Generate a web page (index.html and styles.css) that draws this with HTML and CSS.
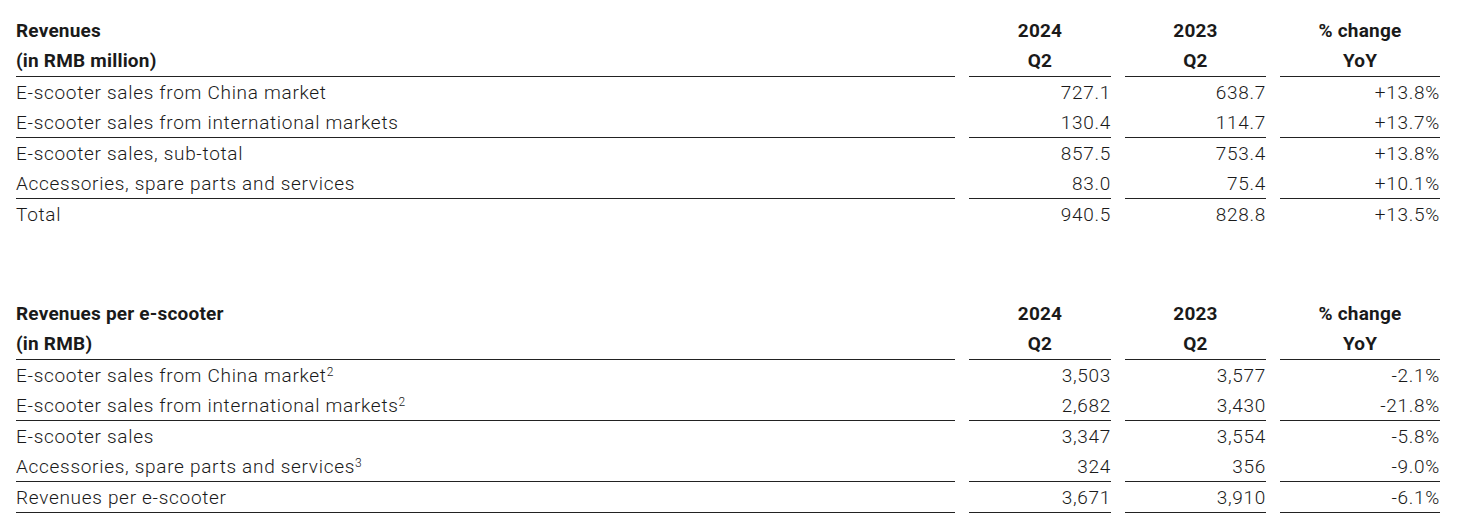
FILE: index.html
```html
<!DOCTYPE html>
<html>
<head>
<meta charset="utf-8">
<link rel="stylesheet" href="styles.css">
</head>
<body>
<div class="page">
  <div class="table">
    <div class="row head">
      <div class="cell label b">Revenues</div>
      <div class="cell c b">2024</div>
      <div class="cell c b">2023</div>
      <div class="cell c b">% change</div>
    </div>
    <div class="row head">
      <div class="cell label b">(in RMB million)</div>
      <div class="cell c b">Q2</div>
      <div class="cell c b">Q2</div>
      <div class="cell c b">YoY</div>
    </div>
    <div class="row line">
      <div class="cell label">E-scooter sales from China market</div>
      <div class="cell num">727.1</div>
      <div class="cell num">638.7</div>
      <div class="cell num">+13.8%</div>
    </div>
    <div class="row">
      <div class="cell label">E-scooter sales from international markets</div>
      <div class="cell num">130.4</div>
      <div class="cell num">114.7</div>
      <div class="cell num">+13.7%</div>
    </div>
    <div class="row line">
      <div class="cell label">E-scooter sales, sub-total</div>
      <div class="cell num">857.5</div>
      <div class="cell num">753.4</div>
      <div class="cell num">+13.8%</div>
    </div>
    <div class="row">
      <div class="cell label">Accessories, spare parts and services</div>
      <div class="cell num">83.0</div>
      <div class="cell num">75.4</div>
      <div class="cell num">+10.1%</div>
    </div>
    <div class="row line">
      <div class="cell label">Total</div>
      <div class="cell num">940.5</div>
      <div class="cell num">828.8</div>
      <div class="cell num">+13.5%</div>
    </div>
  </div>

  <div class="table second">
    <div class="row head">
      <div class="cell label b">Revenues per e-scooter</div>
      <div class="cell c b">2024</div>
      <div class="cell c b">2023</div>
      <div class="cell c b">% change</div>
    </div>
    <div class="row head">
      <div class="cell label b">(in RMB)</div>
      <div class="cell c b">Q2</div>
      <div class="cell c b">Q2</div>
      <div class="cell c b">YoY</div>
    </div>
    <div class="row line">
      <div class="cell label">E-scooter sales from China market<sup>2</sup></div>
      <div class="cell num">3,503</div>
      <div class="cell num">3,577</div>
      <div class="cell num">-2.1%</div>
    </div>
    <div class="row">
      <div class="cell label">E-scooter sales from international markets<sup>2</sup></div>
      <div class="cell num">2,682</div>
      <div class="cell num">3,430</div>
      <div class="cell num">-21.8%</div>
    </div>
    <div class="row line">
      <div class="cell label">E-scooter sales</div>
      <div class="cell num">3,347</div>
      <div class="cell num">3,554</div>
      <div class="cell num">-5.8%</div>
    </div>
    <div class="row">
      <div class="cell label">Accessories, spare parts and services<sup>3</sup></div>
      <div class="cell num">324</div>
      <div class="cell num">356</div>
      <div class="cell num">-9.0%</div>
    </div>
    <div class="row line">
      <div class="cell label">Revenues per e-scooter</div>
      <div class="cell num">3,671</div>
      <div class="cell num">3,910</div>
      <div class="cell num">-6.1%</div>
    </div>
    <div class="row end">
      <div class="cell"></div>
      <div class="cell"></div>
      <div class="cell"></div>
      <div class="cell"></div>
    </div>
  </div>
</div>
</body>
</html>
```

FILE: styles.css
```css
html, body {
  margin: 0;
  padding: 0;
  background: #ffffff;
}
.page {
  padding: 15px 0 0 16px;
  font-family: Roboto, "Liberation Sans", sans-serif;
  font-size: 19px;
  font-weight: 300;
  letter-spacing: 0.7px;
  color: #1a1a1a;
}
.table {
  display: flex;
  flex-direction: column;
}
.second {
  margin-top: 69px;
}
.row {
  display: grid;
  grid-template-columns: 939px 142px 141px 160px;
  column-gap: 14px;
  height: 30px;
}
.row.head {
  height: 30px;
}
.row.head + .row.head {
  height: 31px;
}
.cell {
  display: flex;
  align-items: center;
  white-space: nowrap;
  height: 100%;
  box-sizing: border-box;
}
.row.line .cell {
  border-top: 1px solid #222;
}
.row.line {
  height: 31px;
}
.row.end {
  height: 1px;
}
.row.end .cell {
  border-top: 1px solid #222;
}
.b {
  font-weight: 700;
  letter-spacing: 0.2px;
}
.c {
  justify-content: center;
}
.num {
  justify-content: flex-end;
  padding-right: 0;
}
sup {
  font-size: 12px;
  line-height: 0;
  position: relative;
  top: -3px;
  vertical-align: super;
  margin-left: 0;
  letter-spacing: 0;
}
```
